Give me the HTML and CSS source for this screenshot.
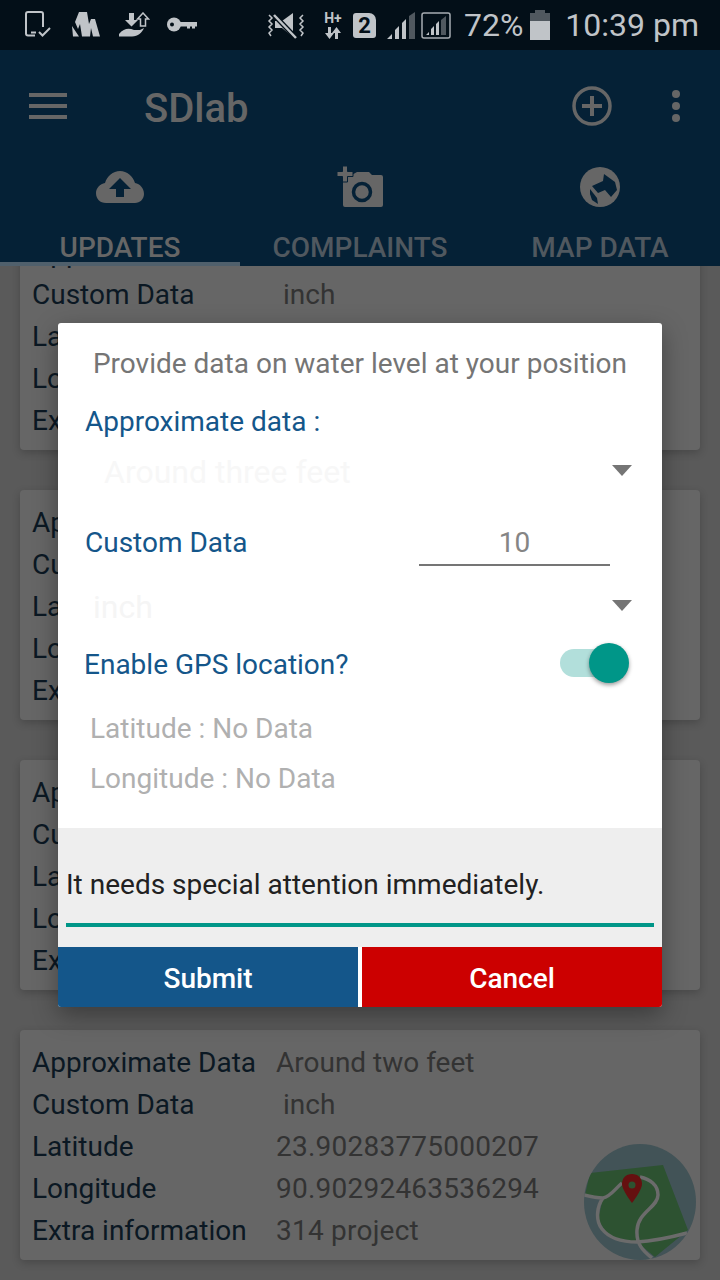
FILE: index.html
```html
<!DOCTYPE html>
<html>
<head>
    <title>SDlab</title>
    <link rel="stylesheet" href="styles.css">
</head>
<body>
    <div class="screen">
        <div class="status">
            <div class="status-left">
                <svg class="st-tablet" width="26" height="26" viewBox="0 0 26 26"><path d="M10 24.500H3a2 2 0 0 1-2-2V3a2 2 0 0 1 2-2h13a2 2 0 0 1 2 2v13M6 21.500h5M14 21l3.500 3.500L25 17" fill="none" stroke="#c0c4c8" stroke-width="2"/></svg>
                <svg class="st-mount" width="28" height="25" viewBox="0 0 28 25"><path d="M0 14l7 10.500H1zM3 10L7 0h8l2 12 2-5h4l5 17.500h-7l-2-8.500-1 8.500h-8L8 12l-2 5z" fill="#c0c4c8"/></svg>
                <svg class="st-hand" width="31" height="25" viewBox="0 0 31 25"><path d="M10 1h5v7h4l-6.500 6.500L6 8h4z" fill="#c0c4c8"/><path d="M24 1l5.500 6h-3v7h-5V7h-3z" fill="none" stroke="#c0c4c8" stroke-width="1.500"/><path d="M0 22c5-6 10-6 15-4h6l4-2c-2 5-6 8-12 8.500H0z" fill="#c0c4c8"/></svg>
                <svg class="st-key" width="30" height="15" viewBox="0 0 30 15"><circle cx="7" cy="7.500" r="7" fill="#c0c4c8"/><circle cx="5" cy="7.500" r="2" fill="#030f18"/><path d="M13 5h17v4.500h-2v2h-3v-2h-2v2h-3v-2h-7z" fill="#c0c4c8"/></svg>
            </div>
            <div class="status-right">
                <svg class="st-vol" width="39" height="26" viewBox="0 0 39 26"><path d="M26 0v24L15 15H8V8h7z" fill="#c0c4c8"/><path d="M7 2l22 23" stroke="#030f18" stroke-width="5"/><path d="M7 2l22 23" stroke="#c0c4c8" stroke-width="2.500"/><path d="M2 2l3 3-3 3 3 3-3 3 3 3-3 3 2 3M36 2l-3 3 3 3-3 3 3 3-3 3 3 3-2 3" fill="none" stroke="#c0c4c8" stroke-width="1.500"/></svg>
                <div class="net-type">
                    <span>H+</span>
                    <svg width="16" height="12" viewBox="0 0 16 12"><path d="M3 0h3v6h3l-4.500 6L0 6h3zM10 12V6H7l4.500-6L16 6h-3v6z" fill="#c0c4c8"/></svg>
                </div>
                <div class="sim">2</div>
                <svg class="sig-one" width="28" height="27" viewBox="0 0 28 27"><path d="M0 27l5-5v5zM8 27v-9l4-4v13zM15 27V11l4-4v20z" fill="#c0c4c8"/><path d="M22 27V4l6-4v27z" fill="#50585f"/></svg>
                <svg class="sig-two" width="30" height="27" viewBox="0 0 30 27"><rect x="1" y="1" width="28" height="25" rx="2" fill="none" stroke="#a8adb2" stroke-width="1.500"/><path d="M5 23l3-3v3zM10 23v-6l3-3v9zM15 23V12l3-3v14z" fill="#c0c4c8"/><path d="M20 23V8l5-4v19z" fill="#50585f"/></svg>
                <span class="battery-pct">72%</span>
                <div class="battery"><div class="battery-fill"></div></div>
                <span class="clock">10:39 pm</span>
            </div>
        </div>

        <div class="appbar">
            <div class="toolbar">
                <div class="burger"><i></i><i></i><i></i></div>
                <div class="app-title">SDlab</div>
                <svg class="add-icon" width="40" height="40" viewBox="0 0 40 40"><circle cx="20" cy="20" r="18" fill="none" stroke="#666" stroke-width="3.500"/><path d="M20 10v20M10 20h20" stroke="#666" stroke-width="4"/></svg>
                <div class="dots"><i></i><i></i><i></i></div>
            </div>
            <div class="tabs">
                <div class="tab tab-active">
                    <div class="tab-icon">
                        <svg width="48" height="32" viewBox="0 0 48 32"><path d="M10 32C4 32 0 28 0 22c0-5 4-9 9-10C11 5 17 0 24 0s13 5 15 12c5 1 9 5 9 11 0 5-4 9-9 9z" fill="#666"/><path d="M24 7L13 18h7v8h8v-8h7z" fill="#052136"/></svg>
                    </div>
                    <span>UPDATES</span>
                </div>
                <div class="tab">
                    <div class="tab-icon">
                        <svg width="46" height="42" viewBox="0 0 46 42"><path d="M6 14L20 6h12l3 3h9q2 0 2 2v28q0 2-2 2H8q-2 0-2-2z" fill="#666"/><path d="M5.500 0h5v5.500H16v5h-5.500V16h-5v-5.500H0v-5h5.500z" fill="#666" stroke="#052136" stroke-width="1"/><circle cx="25" cy="26" r="8.500" fill="none" stroke="#052136" stroke-width="3.500"/></svg>
                    </div>
                    <span>COMPLAINTS</span>
                </div>
                <div class="tab">
                    <div class="tab-icon">
                        <svg width="40" height="40" viewBox="0 0 40 40"><circle cx="20" cy="20" r="20" fill="#666"/><path d="M24 7l11 8 2 8-6 7-6-7-7 3-6-7 11-5z" fill="#052136"/><path d="M10 22l7 9 1 6-6-4-2-6z" fill="#052136"/></svg>
                    </div>
                    <span>MAP DATA</span>
                </div>
            </div>
        </div>

        <div class="list">
            <div class="card">
                <div class="row"><span class="key">Approximate Data</span><span class="val">Around two feet</span></div>
                <div class="row"><span class="key">Custom Data</span><span class="val val-unit">inch</span></div>
                <div class="row"><span class="key">Latitude</span><span class="val val-num">23.90283775000207</span></div>
                <div class="row"><span class="key">Longitude</span><span class="val val-num">90.90292463536294</span></div>
                <div class="row"><span class="key">Extra information</span><span class="val val-num">314 project</span></div>
            </div>
            <div class="card">
                <div class="row"><span class="key">Approximate Data</span><span class="val">Around two feet</span></div>
                <div class="row"><span class="key">Custom Data</span><span class="val val-unit">inch</span></div>
                <div class="row"><span class="key">Latitude</span><span class="val val-num">23.90283775000207</span></div>
                <div class="row"><span class="key">Longitude</span><span class="val val-num">90.90292463536294</span></div>
                <div class="row"><span class="key">Extra information</span><span class="val val-num">314 project</span></div>
            </div>
            <div class="card">
                <div class="row"><span class="key">Approximate Data</span><span class="val">Around two feet</span></div>
                <div class="row"><span class="key">Custom Data</span><span class="val val-unit">inch</span></div>
                <div class="row"><span class="key">Latitude</span><span class="val val-num">23.90283775000207</span></div>
                <div class="row"><span class="key">Longitude</span><span class="val val-num">90.90292463536294</span></div>
                <div class="row"><span class="key">Extra information</span><span class="val val-num">314 project</span></div>
            </div>
            <div class="card">
                <div class="row"><span class="key">Approximate Data</span><span class="val">Around two feet</span></div>
                <div class="row"><span class="key">Custom Data</span><span class="val val-unit">inch</span></div>
                <div class="row"><span class="key">Latitude</span><span class="val val-num">23.90283775000207</span></div>
                <div class="row"><span class="key">Longitude</span><span class="val val-num">90.90292463536294</span></div>
                <div class="row"><span class="key">Extra information</span><span class="val val-num">314 project</span></div>
            </div>
        </div>

        <svg class="map-fab" width="112" height="116" viewBox="0 0 112 116">
            <defs><clipPath id="fabClip"><ellipse cx="56" cy="58" rx="56" ry="58"/></clipPath></defs>
            <ellipse cx="56" cy="58" rx="56" ry="58" fill="#425357"/>
            <g clip-path="url(#fabClip)">
                <path d="M6 29L79 21l25 65-33 27-18-15-27-4-12-18 5-22L1 51z" fill="#2d5231"/>
                <path d="M0 51c8 2 14 3 19 3 7-1 12-9 19-15M56 33c10 2 18 8 18 18 0 12-20 17-21 35-1 14 6 21 15 28M19 54c-6 8-8 22-1 31 7 9 20 13 35 13 20-1 35-5 50-9" fill="none" stroke="#6b6b6b" stroke-width="3.500"/>
            </g>
            <path d="M48 30c-6 0-10 4-10 10 0 6 10 19 10 19s10-13 10-19c0-6-4-10-10-10z" fill="#651010"/>
            <circle cx="48" cy="41" r="3.500" fill="#2d5231"/>
        </svg>

        <div class="dialog">
            <div class="dialog-body">
                <div class="dialog-title">Provide data on water level at your position</div>
                <div class="label label-approx">Approximate data :</div>
                <div class="spinner">
                    <span class="spinner-text">Around three feet</span>
                    <i class="arrow"></i>
                </div>
                <div class="custom-row">
                    <div class="label">Custom Data</div>
                    <div class="custom-input">10</div>
                </div>
                <div class="spinner spinner-unit">
                    <span class="spinner-text">inch</span>
                    <i class="arrow"></i>
                </div>
                <div class="gps-row">
                    <div class="label">Enable GPS location?</div>
                    <div class="switch"><div class="switch-track"></div><div class="switch-thumb"></div></div>
                </div>
                <div class="coord">Latitude : No Data</div>
                <div class="coord">Longitude : No Data</div>
            </div>
            <div class="note">
                <div class="note-text">It needs special attention immediately.</div>
                <div class="note-line"></div>
            </div>
            <div class="actions">
                <div class="btn btn-submit">Submit</div>
                <div class="btn btn-cancel">Cancel</div>
            </div>
        </div>
    </div>
</body>
</html>
```

FILE: styles.css
```css
* { box-sizing: border-box; }
html, body { margin: 0; padding: 0; }
body { font-family: Roboto, sans-serif; background: #5a5a5a; }
.screen { position: relative; width: 720px; height: 1280px; overflow: hidden; background: #5a5a5a; }

.status { height: 50px; background: #030f18; display: flex; justify-content: space-between; align-items: center; padding: 0 21px 0 25px; }
.status-left { display: flex; align-items: center; }
.st-tablet { margin-top: -2px; }
.st-mount { margin-left: 21px; margin-top: -1px; }
.st-hand { margin-left: 19px; margin-top: -1px; }
.st-key { margin-left: 17px; margin-top: -1px; }
.status-right { display: flex; align-items: center; color: #c0c4c8; }
.st-vol { margin-top: 1px; }
.net-type { width: 20px; margin-left: 17px; display: flex; flex-direction: column; align-items: center; gap: 3px; font-size: 14px; line-height: 12px; font-weight: 700; }
.sim { width: 23px; height: 25px; margin-left: 10px; background: #c0c4c8; color: #030f18; font-size: 22px; line-height: 26px; font-weight: 700; text-align: center; border-radius: 3px 7px 3px 3px; }
.sig-one { margin-left: 11px; }
.sig-two { margin-left: 6px; }
.battery-pct { font-size: 32px; margin-left: 13px; line-height: 50px; }
.battery { width: 20px; height: 27px; margin-left: 7px; margin-top: 3px; background: #50585f; position: relative; }
.battery:before { content: ""; position: absolute; left: 5px; top: -3px; width: 10px; height: 3px; background: #50585f; }
.battery-fill { height: 19px; margin-top: 8px; background: #c0c4c8; }
.clock { font-size: 32px; margin-left: 15px; line-height: 50px; }

.appbar { height: 216px; background: #052136; position: relative; z-index: 1; }
.toolbar { height: 108px; display: flex; align-items: center; padding: 3px 40px 0 29px; }
.burger { width: 38px; display: flex; flex-direction: column; gap: 7px; }
.burger i { display: block; height: 4px; background: #666; }
.app-title { font-size: 40px; font-weight: 500; color: #666; margin: 5px 0 0 77px; flex: 1; }
.add-icon { margin-right: 60px; }
.dots { display: flex; flex-direction: column; gap: 4px; }
.dots i { display: block; width: 8px; height: 8px; border-radius: 50%; background: #666; }

.tabs { display: flex; height: 108px; }
.tab { width: 240px; height: 108px; display: flex; flex-direction: column; align-items: center; color: #50585f; font-size: 28px; font-weight: 500; }
.tab-icon { height: 58px; display: flex; align-items: center; justify-content: center; }
.tab span { margin-top: 16px; line-height: 32px; }
.tab-active { color: #666; box-shadow: inset 0 -4px 0 #50606c; }

.list { padding: 0 20px; margin-top: -46px; display: flex; flex-direction: column; gap: 40px; }
.card { height: 230px; background: #666; border-radius: 4px; padding: 12px; box-shadow: 0 3px 8px rgba(0,0,0,0.2); }
.row { display: flex; height: 42px; font-size: 28px; line-height: 42px; color: #0b1823; white-space: nowrap; }
.row .key { width: 244px; }
.row .val { color: #333; }
.row .val-unit { margin-left: 7px; }
.row .val-num { letter-spacing: 0.23px; }

.map-fab { position: absolute; left: 584px; top: 1144px; }

.dialog { position: absolute; left: 58px; top: 323px; width: 604px; height: 684px; background: #fff; border-radius: 3px; box-shadow: 0 8px 24px rgba(0,0,0,0.35); z-index: 2; overflow: hidden; }
.dialog-body { height: 505px; padding: 0 27px; }
.dialog-title { font-size: 28px; line-height: 32px; color: #757575; text-align: center; padding-top: 25px; height: 75px; margin: 0 -27px; white-space: nowrap; }
.label { font-size: 28px; line-height: 32px; color: #14568a; }
.label-approx { height: 39px; margin-top: 8px; }
.spinner { height: 60px; position: relative; }
.spinner-text { font-size: 32px; line-height: 38px; color: #f7f7f7; position: absolute; left: 19px; top: 8px; }
.spinner-unit .spinner-text { left: 8px; color: #f5f5f5; }
.arrow { position: absolute; right: 3px; top: 20px; width: 0; height: 0; border-left: 10px solid transparent; border-right: 10px solid transparent; border-top: 11px solid #757575; }
.custom-row { display: flex; justify-content: space-between; height: 75px; padding-top: 22px; }
.custom-input { width: 191px; height: 39px; margin-right: 25px; border-bottom: 2px solid #757575; font-size: 28px; line-height: 32px; color: #858585; text-align: center; }
.gps-row { display: flex; justify-content: space-between; margin-left: -1px; height: 73px; padding-top: 9px; }
.switch { position: relative; width: 75px; height: 40px; margin-top: -6px; }
.switch-track { position: absolute; left: 0; top: 6px; width: 56px; height: 28px; border-radius: 14px; background: #b2dfdb; }
.switch-thumb { position: absolute; right: 6px; top: 0; width: 40px; height: 40px; border-radius: 50%; background: #009688; box-shadow: 0 2px 4px rgba(0,0,0,0.4); }
.coord { font-size: 28px; line-height: 32px; color: #b0b0b0; padding-left: 5px; height: 50px; }

.note { height: 119px; background: #eee; padding: 0 8px; }
.note-text { padding-top: 41px; height: 95px; font-size: 28px; line-height: 32px; color: #212121; }
.note-line { height: 4px; background: #009688; }
.actions { display: flex; justify-content: space-between; height: 60px; }
.btn { width: 300px; height: 60px; font-size: 28px; font-weight: 500; line-height: 64px; color: #fff; text-align: center; }
.btn-submit { background: #14568a; }
.btn-cancel { background: #cc0000; }
```
